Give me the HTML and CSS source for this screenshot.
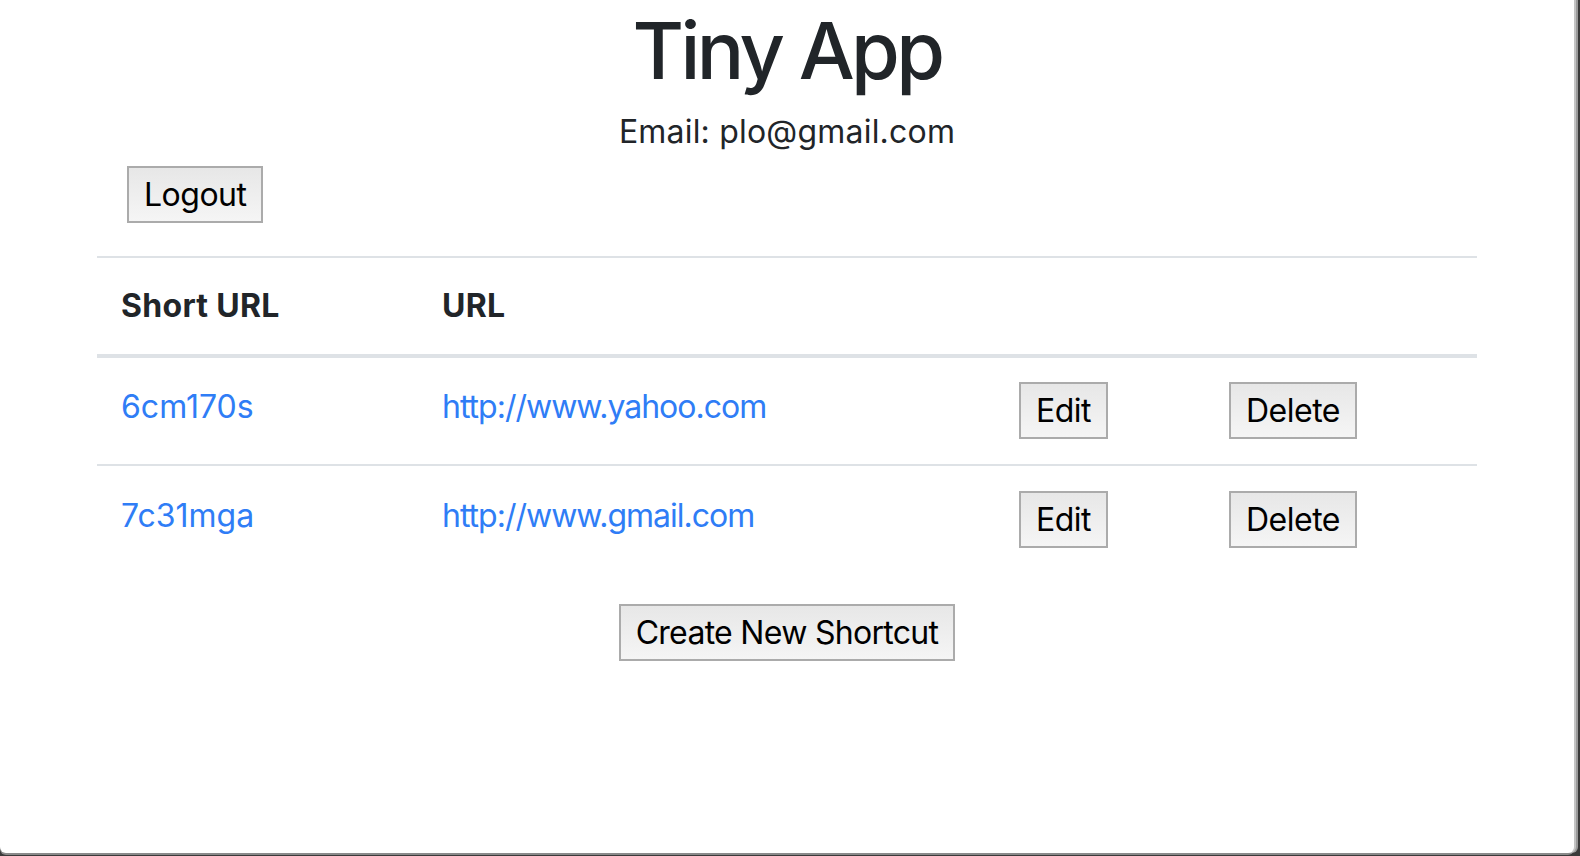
FILE: index.html
```html
<!DOCTYPE html>
<html lang="en">
<head>
<meta charset="utf-8">
<title>Tiny App</title>
<link rel="stylesheet" href="styles.css">
</head>
<body>
<div class="window">
  <main class="container">
    <header class="masthead">
      <h1 class="title">Tiny App</h1>
      <p class="email">Email: plo@gmail.com</p>
    </header>
    <form class="logout-form">
      <button type="button" class="btn">Logout</button>
    </form>
    <table class="urls">
      <colgroup>
        <col class="col-short">
        <col class="col-long">
        <col class="col-edit">
        <col class="col-delete">
      </colgroup>
      <thead>
        <tr>
          <th>Short URL</th>
          <th>URL</th>
          <th></th>
          <th></th>
        </tr>
      </thead>
      <tbody>
        <tr>
          <td><a href="#">6cm170s</a></td>
          <td><a href="#">http://www.yahoo.com</a></td>
          <td><button type="button" class="btn">Edit</button></td>
          <td><button type="button" class="btn">Delete</button></td>
        </tr>
        <tr>
          <td><a href="#">7c31mga</a></td>
          <td><a href="#">http://www.gmail.com</a></td>
          <td><button type="button" class="btn">Edit</button></td>
          <td><button type="button" class="btn">Delete</button></td>
        </tr>
      </tbody>
    </table>
    <div class="create">
      <button type="button" class="btn btn-wide">Create New Shortcut</button>
    </div>
  </main>
</div>
</body>
</html>
```

FILE: styles.css
```css
html, body {
  margin: 0;
  padding: 0;
  height: 100%;
}

body {
  background: #3a3a3a;
  font-family: "Inter", "Noto Sans", "Liberation Sans", sans-serif;
  color: #212529;
  overflow: hidden;
}

.window {
  width: 1574px;
  height: 853px;
  background: #ffffff;
  border-radius: 0 0 6px 6px;
  box-shadow: 2px 0 0 #c4c4c4, 4px 0 0 #9a9a9a, 0 2px 0 #8a8a8a;
  display: flex;
  justify-content: center;
}

.container {
  width: 1380px;
  padding: 0 30px;
  display: flex;
  flex-direction: column;
}

.masthead {
  display: flex;
  flex-direction: column;
  align-items: center;
}

.title {
  margin: 0;
  padding-top: 2px;
  font-size: 79px;
  line-height: 96px;
  font-weight: 500;
  letter-spacing: -3.6px;
}

.email {
  margin: 10px 0 0;
  font-size: 32px;
  line-height: 48px;
  letter-spacing: 0.2px;
}

.logout-form {
  margin: 10px 0 0 30px;
}

.btn {
  font-family: "Inter", "Noto Sans", "Liberation Sans", sans-serif;
  font-size: 32px;
  color: #000;
  height: 57px;
  padding: 0 15px;
  border: 2px solid #ababab;
  border-radius: 0;
  background: linear-gradient(#e7e7e7, #f5f5f5);
  letter-spacing: -0.5px;
  cursor: pointer;
}

.btn-wide {
  letter-spacing: -0.7px;
}

.urls {
  margin-top: 33px;
  width: 1380px;
  border-collapse: collapse;
  table-layout: fixed;
}

.col-short { width: 321px; }
.col-long { width: 577px; }
.col-edit { width: 210px; }
.col-delete { width: 272px; }

.urls th,
.urls td {
  padding: 24px;
  text-align: left;
  vertical-align: top;
  font-size: 32px;
  line-height: 48px;
  border-top: 2px solid #dee2e6;
}

.urls th {
  font-weight: 700;
  border-bottom: 4px solid #dee2e6;
  letter-spacing: 0.3px;
}

.urls tbody tr:first-child td {
  border-top: none;
}

.urls td {
  height: 58px;
}

.urls tbody tr:last-child td {
  padding-top: 25px;
}

.urls a {
  display: inline-block;
  padding-top: 1px;
  color: #2f7df6;
  text-decoration: none;
  letter-spacing: -1px;
}
.urls td:first-child a {
  letter-spacing: 0;
}

.create {
  margin-top: 31px;
  display: flex;
  justify-content: center;
}
```
